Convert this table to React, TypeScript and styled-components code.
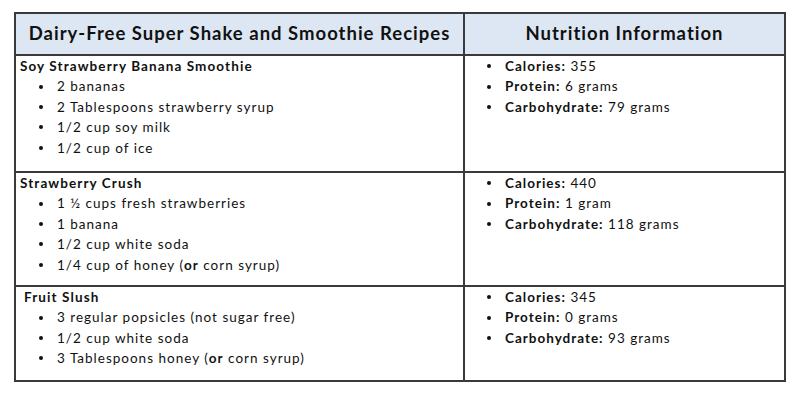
import React from "react";
import styled, { createGlobalStyle } from "styled-components";

const Global = createGlobalStyle`
  html, body { margin: 0; padding: 0; background: #fff; }
  body { font-family: "Lato", "Open Sans", sans-serif; color: #111; }
`;

const Page = styled.div`
  width: 800px;
  height: 400px;
  padding: 12px 0 0 14px;
  box-sizing: border-box;
`;

const Table = styled.table`
  border-collapse: collapse;
  width: 770px;
  table-layout: fixed;
`;

const HeadCell = styled.th`
  background: #dde7f3;
  border: 2px solid #3a3a3a;
  height: 38px;
  padding: 0 0 2px;
  font-size: 18.5px;
  letter-spacing: 1px;
  font-weight: 700;
  text-align: center;
  vertical-align: middle;
  white-space: nowrap;
  color: #111;
`;

const Row = styled.tr<{ $h: number }>`
  height: ${(p) => p.$h}px;
`;

const Cell = styled.td<{ $indent?: number }>`
  border: 2px solid #3a3a3a;
  vertical-align: top;
  padding: 0 4px 0 ${(p) => 4 + (p.$indent ?? 0)}px;
  font-size: 13.5px;
  letter-spacing: 1px;
  line-height: 20.4px;
`;

const Title = styled.div`
  font-weight: 700;
  letter-spacing: 1.1px;
`;

const List = styled.ul`
  list-style: none;
  margin: 0;
  padding: 0;
`;

const Item = styled.li<{ $offset: number }>`
  display: flex;
  align-items: center;
  &::before {
    content: "";
    flex: none;
    width: 4px;
    height: 4px;
    border-radius: 50%;
    background: #111;
    margin-left: ${(p) => p.$offset}px;
    margin-right: 14px;
  }
`;

const B = styled.b`
  font-weight: 700;
`;

type Recipe = {
  title: string;
  indent?: number;
  items: React.ReactNode[];
  nutrition: [string, string][];
  h: number;
};

const recipes: Recipe[] = [
  {
    title: "Soy Strawberry Banana Smoothie",
    items: ["2 bananas", "2 Tablespoons strawberry syrup", "1/2 cup soy milk", "1/2 cup of ice"],
    nutrition: [
      ["Calories:", "355"],
      ["Protein:", "6 grams"],
      ["Carbohydrate:", "79 grams"],
    ],
    h: 117,
  },
  {
    title: "Strawberry Crush",
    items: [
      "1 ½ cups fresh strawberries",
      "1 banana",
      "1/2 cup white soda",
      <>1/4 cup of honey (<B>or</B> corn syrup)</>,
    ],
    nutrition: [
      ["Calories:", "440"],
      ["Protein:", "1 gram"],
      ["Carbohydrate:", "118 grams"],
    ],
    h: 114,
  },
  {
    title: "Fruit Slush",
    indent: 4,
    items: [
      "3 regular popsicles (not sugar free)",
      "1/2 cup white soda",
      <>3 Tablespoons honey (<B>or</B> corn syrup)</>,
    ],
    nutrition: [
      ["Calories:", "345"],
      ["Protein:", "0 grams"],
      ["Carbohydrate:", "93 grams"],
    ],
    h: 95,
  },
];

export default function App() {
  return (
    <>
      <Global />
      <Page>
        <Table>
          <colgroup>
            <col style={{ width: 449 }} />
            <col style={{ width: 321 }} />
          </colgroup>
          <thead>
            <tr>
              <HeadCell>Dairy-Free Super Shake and Smoothie Recipes</HeadCell>
              <HeadCell>Nutrition Information</HeadCell>
            </tr>
          </thead>
          <tbody>
            {recipes.map((r) => (
              <Row key={r.title} $h={r.h}>
                <Cell $indent={r.indent}>
                  <Title>{r.title}</Title>
                  <List>
                    {r.items.map((it, i) => (
                      <Item key={i} $offset={19 - (r.indent ?? 0)}>
                        <span>{it}</span>
                      </Item>
                    ))}
                  </List>
                </Cell>
                <Cell>
                  <List>
                    {r.nutrition.map(([k, v]) => (
                      <Item key={k} $offset={18}>
                        <span>
                          <B>{k}</B> {v}
                        </span>
                      </Item>
                    ))}
                  </List>
                </Cell>
              </Row>
            ))}
          </tbody>
        </Table>
      </Page>
    </>
  );
}
